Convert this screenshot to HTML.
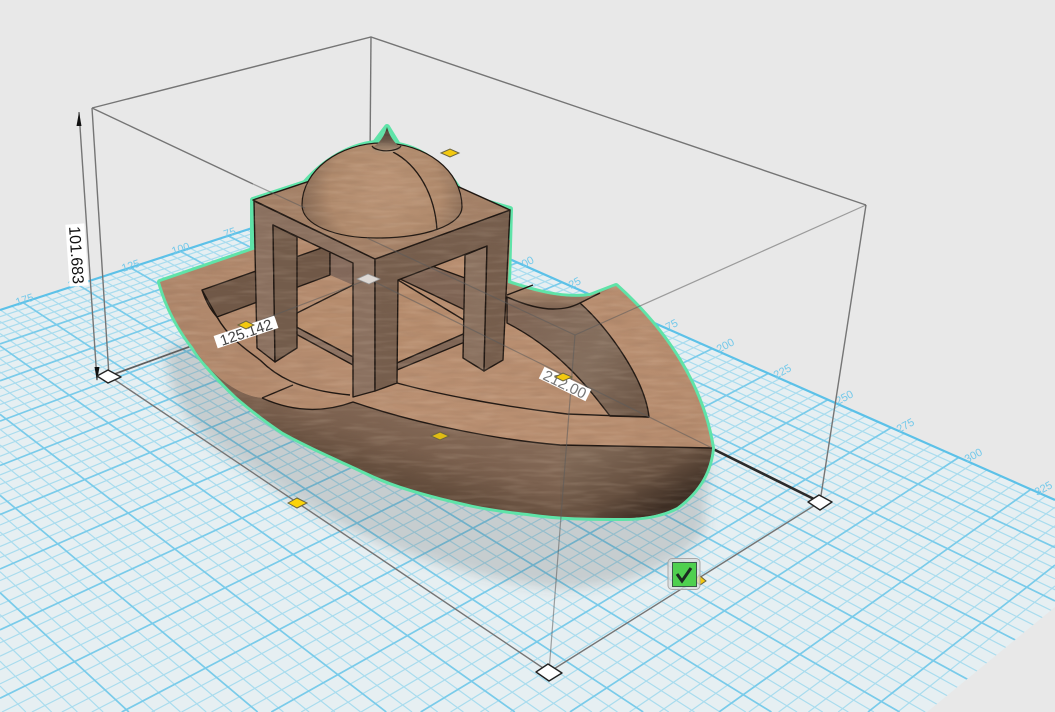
<!DOCTYPE html>
<html>
<head>
<meta charset="utf-8">
<style>
html,body{margin:0;padding:0;background:#e8e8e8;width:1055px;height:712px;overflow:hidden}
svg{display:block;position:absolute;left:0;top:0;overflow:hidden}
text{font-family:"Liberation Sans",sans-serif}
</style>
</head>
<body>
<svg id="s" width="1055" height="712" viewBox="0 0 1055 712" xmlns="http://www.w3.org/2000/svg">
<defs>
<filter id="blur" x="-20%" y="-20%" width="140%" height="140%"><feGaussianBlur stdDeviation="6"/></filter>
<filter id="wood" x="0" y="0" width="100%" height="100%">
  <feTurbulence type="fractalNoise" baseFrequency="0.03 0.22" numOctaves="2" seed="5"/>
  <feColorMatrix type="matrix" values="0 0 0 0 0.93  0 0 0 0 0.76  0 0 0 0 0.60  1.4 0 0 0 -0.6"/>
</filter>
<filter id="woodD" x="0" y="0" width="100%" height="100%">
  <feTurbulence type="fractalNoise" baseFrequency="0.04 0.2" numOctaves="2" seed="11"/>
  <feColorMatrix type="matrix" values="0 0 0 0 0.2  0 0 0 0 0.12  0 0 0 0 0.08  1.4 0 0 0 -0.6"/>
</filter>
<linearGradient id="hull" gradientUnits="userSpaceOnUse" x1="470" y1="405" x2="440" y2="505">
  <stop offset="0" stop-color="#8b705d"/><stop offset=".55" stop-color="#7a604e"/><stop offset="1" stop-color="#5a4535"/>
</linearGradient>
<linearGradient id="hull2" gradientUnits="userSpaceOnUse" x1="600" y1="445" x2="640" y2="520">
  <stop offset="0" stop-color="#806957"/><stop offset=".6" stop-color="#654f3f"/><stop offset="1" stop-color="#3d2e24"/>
</linearGradient>
<linearGradient id="deck" gradientUnits="userSpaceOnUse" x1="160" y1="280" x2="700" y2="440">
  <stop offset="0" stop-color="#ae866a"/><stop offset=".5" stop-color="#b98f71"/><stop offset="1" stop-color="#b68c6e"/>
</linearGradient>
<radialGradient id="dome" gradientUnits="userSpaceOnUse" cx="385" cy="190" r="92">
  <stop offset="0" stop-color="#bd9678"/><stop offset=".6" stop-color="#b08a6c"/><stop offset=".88" stop-color="#8c6e58"/><stop offset="1" stop-color="#6b5240"/>
</radialGradient>
<linearGradient id="spike" x1="0" y1="0" x2="0" y2="1">
  <stop offset="0" stop-color="#3f3129"/><stop offset=".55" stop-color="#6f5b4c"/><stop offset="1" stop-color="#b89a7e"/>
</linearGradient>
<linearGradient id="wallR" gradientUnits="userSpaceOnUse" x1="510" y1="310" x2="640" y2="400">
  <stop offset="0" stop-color="#7f6555"/><stop offset=".6" stop-color="#86705f"/><stop offset="1" stop-color="#6d5747"/>
</linearGradient>
<linearGradient id="raised" gradientUnits="userSpaceOnUse" x1="560" y1="292" x2="560" y2="310">
  <stop offset="0" stop-color="#a5846a"/><stop offset="1" stop-color="#7c6352"/>
</linearGradient>
<clipPath id="boatClip"><path d="M160,282 L253,250 L253,200 L305,183 C325,160 350,146 375,143 L387,127 L398,145 C425,150 448,170 462,195 L510,209 L508,283 C530,290 560,300 590,296 L616,286 C665,330 702,385 712,448 C710,470 700,490 677,507 C660,516 640,518 623,518 C590,518 560,518 527,513 C500,510 480,507 460,502 C430,495 395,486 366,472 C345,462 310,447 283,432 C265,420 250,408 237,397 C215,376 200,358 193,347 C180,330 168,310 160,282 Z"/></clipPath>
</defs>

<rect width="1055" height="712" fill="#e8e8e8"/>
<polygon points="360,193 0,310 0,712 1055,712 1055,500" fill="#e6eff2"/>
<g id="grid"></g>
<polygon points="1055,607 927,712 1055,712" fill="#e8e8e8"/>
<g stroke="#5cc1e8" stroke-width="2.2" fill="none">
  <line x1="360" y1="193" x2="0" y2="310"/>
  <line x1="360" y1="193" x2="1055" y2="500"/>
</g>
<g font-size="11" fill="#74c9ea">
  <text transform="translate(17,306) rotate(-18)">175</text>
  <text transform="translate(69,289) rotate(-18)">150</text>
  <text transform="translate(123,272) rotate(-18)">125</text>
  <text transform="translate(173,255) rotate(-18)">100</text>
  <text transform="translate(225,238) rotate(-18)">75</text>
  <text transform="translate(524,268) rotate(-28)">00</text>
  <text transform="translate(571,289) rotate(-28)">25</text>
  <text transform="translate(668,331) rotate(-28)">75</text>
  <text transform="translate(719,353) rotate(-28)">200</text>
  <text transform="translate(776,379) rotate(-28)">225</text>
  <text transform="translate(838,405) rotate(-28)">250</text>
  <text transform="translate(899,433) rotate(-28)">275</text>
  <text transform="translate(967,463) rotate(-28)">300</text>
  <text transform="translate(1037,496) rotate(-28)">325</text>
</g>

<!-- shadow -->
<path d="M165,350 C168,400 190,435 250,470 C330,530 440,575 550,588 C610,592 680,570 705,530 L710,450 L300,300 Z" fill="#4a4a4a" fill-opacity=".21" filter="url(#blur)"/>

<!-- back bbox lines -->
<g stroke="#757575" stroke-width="1.4" fill="none">
  <polyline points="92,108 371,37 866,205"/>
  <line x1="371" y1="37" x2="369" y2="279"/>
  <line x1="92" y1="108" x2="109" y2="376"/>
  <line x1="866" y1="205" x2="820" y2="502"/>
  <line x1="109" y1="376" x2="549" y2="672"/>
  <line x1="549" y1="672" x2="820" y2="502"/>
  <line x1="79" y1="112" x2="97" y2="380"/>
  <line x1="92" y1="108" x2="253" y2="184"/>
</g>
<line x1="109" y1="376" x2="230" y2="332" stroke="#5e5e5e" stroke-width="1.7"/>
<line x1="705" y1="445" x2="820" y2="502" stroke="#2b2b2b" stroke-width="2.6"/>
<polygon points="79,112 76.500,126 81.500,126" fill="#111"/>
<polygon points="97,381 94.500,367 99.500,367" fill="#111"/>

<!-- glow -->
<path d="M160,282 L253,250 L253,200 L305,183 C325,160 350,146 375,143 L387,127 L398,145 C425,150 448,170 462,195 L510,209 L508,283 C530,290 560,300 590,296 L616,286 C665,330 702,385 712,448 C710,470 700,490 677,507 C660,516 640,518 623,518 C590,518 560,518 527,513 C500,510 480,507 460,502 C430,495 395,486 366,472 C345,462 310,447 283,432 C265,420 250,408 237,397 C215,376 200,358 193,347 C180,330 168,310 160,282 Z" fill="#7b6150" stroke="#5fe3a8" stroke-width="6" stroke-linejoin="round"/>

<g stroke="#1f1712" stroke-width="1.4" stroke-linejoin="round">
  <!-- deck -->
  <path d="M160,282 L253,250 L300,230 L510,240 L508,283 C530,290 560,300 590,296 L616,286 C665,330 702,385 712,448 L560,445 C500,440 420,425 353,402 C323,413 293,412 262,398 C235,396 207,370 193,347 C180,330 168,310 160,282 Z" fill="url(#deck)" stroke="none"/>
  <!-- hull -->
  <path d="M193,347 C207,370 235,396 262,398 C293,412 323,413 353,402 C420,425 500,440 560,445 L712,448 C710,470 700,490 677,507 C660,516 640,518 623,518 C590,518 560,518 527,513 C500,510 480,507 460,502 C430,495 395,486 366,472 C345,462 310,447 283,432 C265,420 250,408 237,397 C215,376 200,358 193,347 Z" fill="url(#hull)" stroke="none"/>
  <path d="M560,445 L712,448 C710,470 700,490 677,507 C660,516 640,518 623,518 C600,518 580,517 560,515 Z" fill="url(#hull2)" stroke="none"/>
  <path d="M262,398 C293,412 323,413 353,402 C420,425 500,440 560,445 L712,448" fill="none"/>
  <path d="M262,398 L293,385" fill="none"/>
  <!-- left well wall -->
  <polygon points="202,290 330,245 330,275 217,317" fill="#705847"/>
  <path d="M202,290 C207,304 211,310 217,317 C230,340 250,352 260,360 C275,375 297,390 350,395" fill="none"/>
  <!-- right raised deck + wall -->
  <path d="M507,283 C530,290 560,300 590,296 L616,286 L580,303 C572,307 565,309 553,309 C540,309 525,305 507,297 Z" fill="url(#raised)" stroke="none"/>
  <path d="M507,297 C525,305 540,309 553,309 C565,309 572,307 580,303 C610,330 645,380 649,417 L610,416 C590,390 560,350 507,323 Z" fill="url(#wallR)"/>
  <path d="M580,303 L600,293" fill="none"/>
  <path d="M507,295 L533,285" fill="none"/>
  <path d="M397,383 C430,392 490,405 567,414 L649,417" fill="none"/>
  <!-- interior back bits -->
  <polygon points="297,237 353,263 353,285 330,275 330,253" fill="#82685a" stroke="none"/>
  <line x1="330" y1="253" x2="330" y2="275"/>
  <polygon points="398,278 432,266 465,278 465,310" fill="#7e6454"/>
  <!-- shelf -->
  <polygon points="283,320 353,285 398,280 477,328 397,363 353,357" fill="#b68c6d"/>
  <polygon points="283,320 353,357 353,365 283,327" fill="#8a7060"/>
  <polygon points="397,363 477,328 477,337 397,370" fill="#7f6656"/>
  <!-- right pillar inner face -->
  <polygon points="465,255 487,246 484,371 463,358" fill="#8b7260"/>
  <!-- left pillar & left fascia -->
  <polygon points="254,201 375,259 375,391 353,397 353,263 273,225 275,362 257,348" fill="#8b7160"/>
  <polygon points="273,225 297,237 297,348 275,362" fill="#735c4b"/>
  <!-- front fascia + pillars -->
  <polygon points="375,259 510,210 503,360 484,371 487,246 398,280 397,383 375,391" fill="#765e4d"/>
  <!-- roof -->
  <polygon points="253,200 388,155 510,210 375,259" fill="#a58268"/>
</g>

<!-- dome -->
<path d="M302,205 C302,170 340,143 382,143 C425,143 462,170 462,207 C462,225 425,238 377,238 C335,238 302,225 302,205 Z" fill="url(#dome)" stroke="#1f1712" stroke-width="1.2"/>
<path d="M393,152 C418,165 435,195 437,230" fill="none" stroke="#1f1712" stroke-width="1.3"/>
<path d="M387,127 C390,138 396,144 401,148 A15,6.500 0 0 1 372,148 C378,144 384,138 387,127 Z" fill="url(#spike)" stroke="none"/>
<path d="M372,146 A15,6.500 0 0 0 401,146" fill="none" stroke="#1f1712" stroke-width="1.2"/>

<!-- texture -->
<g clip-path="url(#boatClip)">
  <rect x="150" y="120" width="570" height="410" filter="url(#wood)" opacity=".22"/>
  <rect x="150" y="120" width="570" height="410" filter="url(#woodD)" opacity=".22"/>
</g>

<!-- overlay lines across the boat -->
<g stroke="#5b5b5b" stroke-opacity=".55" stroke-width="1.2" fill="none">
  <line x1="253" y1="184" x2="305" y2="208"/>
  <line x1="367" y1="238" x2="575" y2="335"/>
  <line x1="866" y1="205" x2="575" y2="335"/>
  <line x1="575" y1="335" x2="549" y2="672"/>
  <line x1="230" y1="332" x2="369" y2="279"/>
  <line x1="369" y1="279" x2="712" y2="448"/>
</g>

<!-- dimension labels -->
<g transform="translate(77,255) rotate(86)">
  <rect x="-31" y="-9.500" width="62" height="19" fill="#fff"/>
  <text x="0" y="6" font-size="16" text-anchor="middle" fill="#111">101.683</text>
</g>
<g transform="translate(246,332) rotate(-18.500)">
  <rect x="-32" y="-6.500" width="64" height="13" fill="#fff"/>
  <text x="0" y="5.500" font-size="15" text-anchor="middle" fill="#444">125.142</text>
</g>
<g transform="translate(565,384) rotate(26)">
  <rect x="-26" y="-6.500" width="52" height="13" fill="#fff"/>
  <text x="0" y="5.500" font-size="15" text-anchor="middle" fill="#777">212.00</text>
</g>

<!-- handles -->
<g stroke="#222" stroke-width="1.4" fill="#fff" stroke-linejoin="round">
  <polygon points="97,376 108,370 121,377 108,383"/>
  <polygon points="808,502 819,495 832,502 820,510"/>
  <polygon points="536,672 548,664 562,673 549,681"/>
</g>
<polygon points="357,279 368,274 380,279 369,284" fill="#ddd8d4" stroke="#999" stroke-width=".7"/>
<g fill="#f3c90f" stroke="#6b6440" stroke-width="1">
  <polygon points="441,153 450,149 459,153 450,157"/>
  <polygon points="238,325 246,321 254,325 246,329"/>
  <polygon points="555,377 563,373 572,377 563,381"/>
  <polygon points="431,436 440,432 449,436 440,440" fill="#e0bc12"/>
  <polygon points="288,503 297,498 307,503 297,508" fill="#fbd40a"/>
  <polygon points="695,581 699,575 706,581 700,585"/>
</g>

<!-- check button -->
<rect x="668" y="558.500" width="32" height="31" rx="4" fill="#d8dcdc" fill-opacity=".75" stroke="#a8a8a8"/>
<rect x="672.500" y="562.500" width="24" height="24" fill="#4fd04f" stroke="#3c5a48" stroke-width="1"/>
<path d="M677,574 L682,581 L691,568" fill="none" stroke="#1c2a22" stroke-width="3"/>
</svg>
<script>
(function(){
 var g=document.getElementById('grid'),NS='http://www.w3.org/2000/svg';
 var V1=[-1150,-472],V2=[2360,-460];
 function add(x1,y1,x2,y2,c,w){
  var dx=x2-x1,dy=y2-y1,t0=0,t1=1,p=[-dx,dx,-dy,dy],q=[x1,1055-x1,y1,712-y1];
  for(var i=0;i<4;i++){
   if(p[i]===0){if(q[i]<0)return;continue;}
   var r=q[i]/p[i];
   if(p[i]<0){if(r>t1)return;if(r>t0)t0=r;}else{if(r<t0)return;if(r<t1)t1=r;}
  }
  var l=document.createElementNS(NS,'line');
  l.setAttribute('x1',x1+t0*dx);l.setAttribute('y1',y1+t0*dy);
  l.setAttribute('x2',x1+t1*dx);l.setAttribute('y2',y1+t1*dy);
  l.setAttribute('stroke',c);l.setAttribute('stroke-width',w);g.appendChild(l);
 }
 function fam(maj){
  for(var t=5;t<=400;t+=5){
   var isM=t%25===0; if(isM!==maj)continue;
   var c=isM?'#79cbea':'#a9dcee',w=isM?1.7:1.2;
   if(t<=355){
    var x=V1[0]+1/(6.623e-4-0.00627e-4*t), y=33.6+0.442*x;
    add(x,y,x+(x-V2[0])*3,y+(y-V2[1])*3,c,w);
   }
   if(t<=340){
    var xa=V2[0]-1/(5e-4-0.00412e-4*t), ya=310-0.325*xa;
    add(xa,ya,xa+(xa-V1[0])*3,ya+(ya-V1[1])*3,c,w);
   }
  }
 }
 fam(false);fam(true);
})();
</script>
</body>
</html>
